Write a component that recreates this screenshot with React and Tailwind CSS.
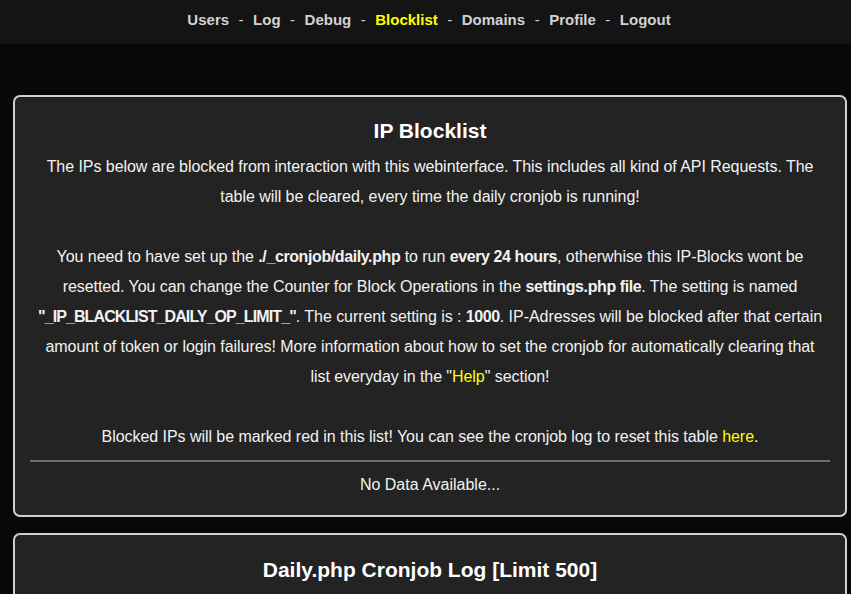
import React from 'react';

const navItems = ['Users', 'Log', 'Debug', 'Blocklist', 'Domains', 'Profile', 'Logout'];

const Nav = () => (
  <nav className="h-[44px] bg-[#141414] flex items-center justify-center pb-[4px] pl-[7px]">
    {navItems.map((item, i) => (
      <React.Fragment key={item}>
        {i > 0 && <span className="mx-[9.5px] text-[#d2d2d2] text-[15px]">-</span>}
        <a
          href="#"
          className={`text-[15px] font-bold ${item === 'Blocklist' ? 'text-[#ffff00]' : 'text-[#d2d2d2]'}`}
        >
          {item}
        </a>
      </React.Fragment>
    ))}
  </nav>
);

const Card = ({ title, className = 'pt-[19px]', children }) => (
  <div className={`border-2 border-[#d0d0d0] rounded-[7px] bg-[#232323] px-[15px] pb-[15px] text-center ${className}`}>
    <h1 className="text-[21px] font-bold leading-[30px] text-white mb-[6px]">{title}</h1>
    {children}
  </div>
);

export default function App() {
  return (
    <div className="min-h-screen bg-[#080808] font-['Liberation_Sans',sans-serif] text-[#f2f2f2]">
      <Nav />

      <main className="pt-[51px] pl-[13px] pr-[4px] flex flex-col gap-[16px]">
        <Card title="IP Blocklist">
          <p className="text-[16px] leading-[30px] tracking-[-0.05px]">
            The IPs below are blocked from interaction with this webinterface. This includes all kind of API Requests. The
            <br />
            table will be cleared, every time the daily cronjob is running!
            <br />
            <br />
            You need to have set up the <b className="tracking-[-0.4px]">./_cronjob/daily.php</b> to run{' '}
            <b className="tracking-[-0.4px]">every 24 hours</b>, otherwhise this IP-Blocks wont be
            <br />
            resetted. You can change the Counter for Block Operations in the{' '}
            <b className="tracking-[-0.4px]">settings.php file</b>. The setting is named
            <br />
            <b className="tracking-[-0.9px]">"_IP_BLACKLIST_DAILY_OP_LIMIT_"</b>. The current setting is :{' '}
            <b className="tracking-[-0.4px]">1000</b>. IP-Adresses will be blocked after that certain
            <br />
            amount of token or login failures! More information about how to set the cronjob for automatically clearing that
            <br />
            list everyday in the "<a href="#" className="text-[#ffff00]">Help</a>" section!
            <br />
            <br />
            Blocked IPs will be marked red in this list! You can see the cronjob log to reset this table{' '}
            <a href="#" className="text-[#ffff00]">here</a>.
          </p>
          <hr className="border-0 h-[2px] bg-[#6e6e6e] mt-[8px] mb-[8px]" />
          <p className="text-[16px] leading-[30px]">No Data Available...</p>
        </Card>

        <Card title="Daily.php Cronjob Log [Limit 500]" className="pt-[20px]">
          <div className="h-[60px]" />
        </Card>
      </main>
    </div>
  );
}
